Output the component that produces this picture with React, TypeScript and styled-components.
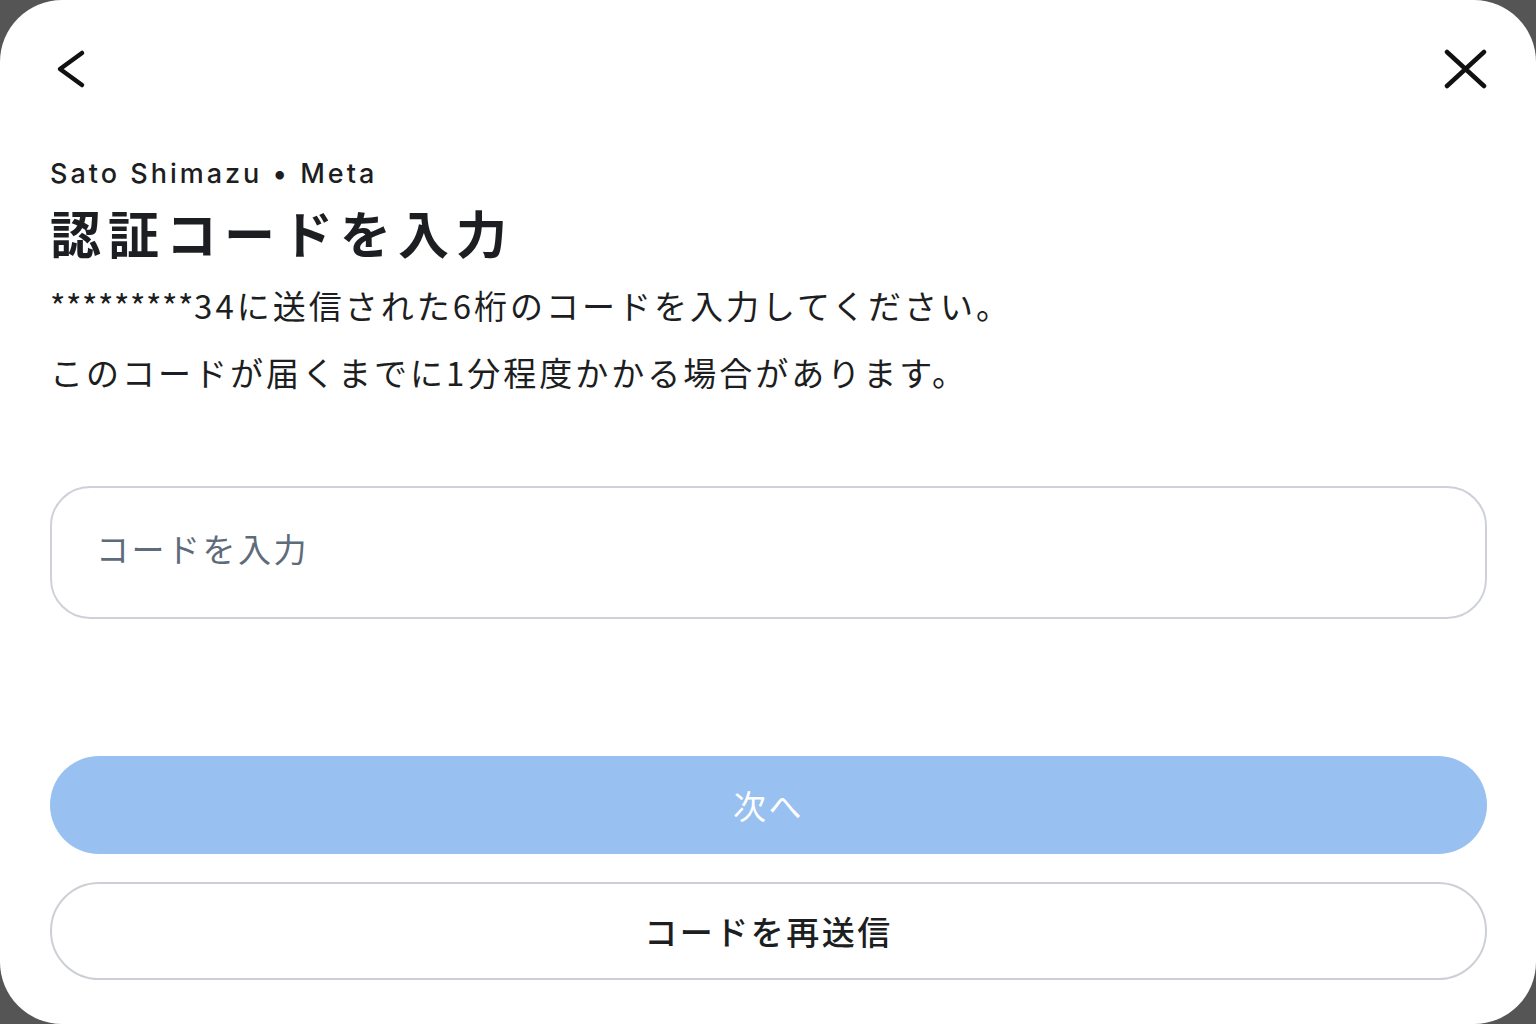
import React from "react";
import styled, { createGlobalStyle } from "styled-components";

const GlobalStyle = createGlobalStyle`
  html, body {
    margin: 0;
    padding: 0;
    background: #555555;
  }
  body {
    font-family: "Noto Sans", "Noto Sans CJK JP", sans-serif;
    color: #1c1e21;
  }
`;

const Sheet = styled.div`
  box-sizing: border-box;
  width: 1536px;
  height: 1024px;
  background: #ffffff;
  border-radius: 62px;
  padding: 44px 49px 44px 50px;
  display: flex;
  flex-direction: column;
`;

const TopBar = styled.div`
  display: flex;
  justify-content: space-between;
  align-items: center;
  height: 52px;
`;

const IconButton = styled.button`
  height: 52px;
  padding: 0;
  border: none;
  background: transparent;
  display: flex;
  align-items: center;
  cursor: pointer;
`;

const Account = styled.div`
  margin-top: 60px;
  font-family: "Inter", "Noto Sans CJK JP", sans-serif;
  font-size: 27px;
  font-weight: 500;
  letter-spacing: 3px;
  line-height: 36px;
  color: #1c1e21;
`;

const Title = styled.h1`
  margin: 8px 0 0;
  font-family: "Noto Sans CJK JP", sans-serif;
  font-size: 51px;
  font-weight: 700;
  letter-spacing: 7px;
  line-height: 64px;
  color: #1c1e21;
`;

const Text = styled.p<{ $top: number }>`
  margin: ${(p) => p.$top}px 0 0;
  font-family: "Noto Sans CJK JP", sans-serif;
  font-size: 33px;
  font-weight: 400;
  letter-spacing: 3px;
  line-height: 44px;
  color: #1c1e21;
`;

const Masked = styled.span`
  letter-spacing: 0.6px;
`;

const CodeField = styled.input`
  box-sizing: border-box;
  margin-top: 92px;
  width: 100%;
  height: 133px;
  border: 2px solid #ced2d8;
  border-radius: 40px;
  padding: 0 44px 10px;
  font-family: "Noto Sans CJK JP", sans-serif;
  font-size: 33px;
  letter-spacing: 2.5px;
  color: #1c1e21;
  outline: none;
  &::placeholder {
    color: #5d6b7b;
  }
`;

const Actions = styled.div`
  margin-top: auto;
  display: flex;
  flex-direction: column;
  gap: 28px;
`;

const PillButton = styled.button<{ $primary?: boolean }>`
  box-sizing: border-box;
  width: 100%;
  height: 98px;
  border-radius: 49px;
  border: ${(p) => (p.$primary ? "none" : "2px solid #ccd0d5")};
  background: ${(p) => (p.$primary ? "#98c0f0" : "#ffffff")};
  color: ${(p) => (p.$primary ? "#ffffff" : "#1c1e21")};
  font-family: "Noto Sans CJK JP", sans-serif;
  font-size: 33px;
  font-weight: ${(p) => (p.$primary ? 400 : 500)};
  letter-spacing: 2.5px;
  cursor: pointer;
`;

const BackIcon = () => (
  <svg width="44" height="44" viewBox="0 0 44 44">
    <path d="M32 5 L10 21 L32 37" fill="none" stroke="#111" strokeWidth="4.5" strokeLinecap="round" strokeLinejoin="round" />
  </svg>
);

const CloseIcon = () => (
  <svg width="44" height="44" viewBox="0 0 44 44">
    <path d="M4 4 L41 38 M41 4 L4 38" fill="none" stroke="#111" strokeWidth="4.5" strokeLinecap="round" />
  </svg>
);

const App = () => {
  return (
    <>
      <GlobalStyle />
      <Sheet>
        <TopBar>
          <IconButton aria-label="戻る">
            <BackIcon />
          </IconButton>
          <IconButton aria-label="閉じる">
            <CloseIcon />
          </IconButton>
        </TopBar>
        <Account>Sato Shimazu • Meta</Account>
        <Title>認証コードを入力</Title>
        <Text $top={19}>
          <Masked>*********</Masked>34に送信された6桁のコードを入力してください。
        </Text>
        <Text $top={23}>このコードが届くまでに1分程度かかる場合があります。</Text>
        <CodeField placeholder="コードを入力" />
        <Actions>
          <PillButton $primary>次へ</PillButton>
          <PillButton>コードを再送信</PillButton>
        </Actions>
      </Sheet>
    </>
  );
};

export default App;
